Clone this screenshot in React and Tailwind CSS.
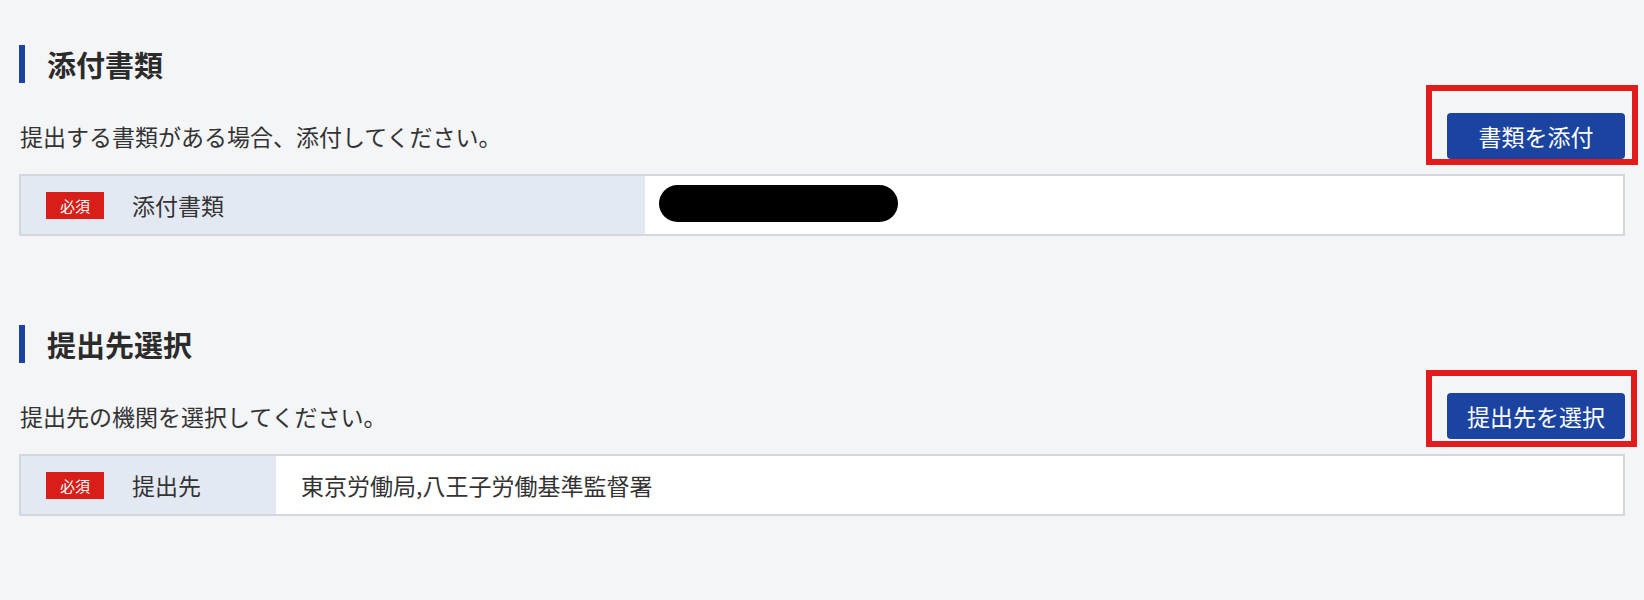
const FONT = { fontFamily: '"Noto Sans CJK JP", "Noto Sans", sans-serif' };

const sections = [
  {
    key: 'attach',
    title: '添付書類',
    description: '提出する書類がある場合、添付してください。',
    button: '書類を添付',
    label: '添付書類',
    labelWidth: 'w-[624px]',
    value: null,
    highlight: '-left-[21px] -top-[28px] -right-[13px] -bottom-[6px]',
  },
  {
    key: 'dest',
    title: '提出先選択',
    description: '提出先の機関を選択してください。',
    button: '提出先を選択',
    label: '提出先',
    labelWidth: 'w-[255px]',
    value: '東京労働局,八王子労働基準監督署',
    highlight: '-left-[21px] -top-[23px] -right-[12px] -bottom-[8px]',
  },
];

function Section({ s }) {
  return (
    <section className="mb-[89px]">
      {/* Heading with left accent bar */}
      <div className="flex items-center h-[38px]">
        <span className="w-[6px] h-full bg-[#1b44a0]" />
        <h2 className="ml-[22px] text-[29px] font-bold text-[#2b2b2b] leading-none">{s.title}</h2>
      </div>

      {/* Description + action */}
      <div className="mt-[30px] flex items-center justify-between h-[46px]">
        <p className="pl-px text-[23px] text-[#333333] leading-none">{s.description}</p>
        <div className="relative">
          <span className={`absolute ${s.highlight} border-[6px] border-[#e21b1b] pointer-events-none`} />
          <button className="relative w-[178px] h-[46px] rounded-[4px] bg-[#1b44a0] text-white text-[23px] leading-none">
            {s.button}
          </button>
        </div>
      </div>

      {/* Field row */}
      <div className="mt-[15px] flex h-[62px] border-2 border-[#d3d6dc]">
        <div className={`${s.labelWidth} shrink-0 flex items-center bg-[#e3e9f3] pl-[25px]`}>
          <span className="w-[58px] h-[27px] flex items-center justify-center bg-[#d71e18] text-white text-[15px] leading-none">
            必須
          </span>
          <span className="ml-[28px] text-[23px] text-[#333333] leading-none">{s.label}</span>
        </div>
        <div className="flex-1 flex items-center bg-white">
          {s.value ? (
            <span className="pl-[25px] text-[23px] text-[#333333] leading-none">{s.value}</span>
          ) : (
            <span className="ml-[14px] mb-[4px] w-[239px] h-[37px] rounded-full bg-black" />
          )}
        </div>
      </div>
    </section>
  );
}

export default function App() {
  return (
    <div className="min-h-screen bg-[#f4f5f7] pt-[45px] pl-[19px] pr-[19px]" style={FONT}>
      {sections.map((s) => (
        <Section key={s.key} s={s} />
      ))}
    </div>
  );
}
